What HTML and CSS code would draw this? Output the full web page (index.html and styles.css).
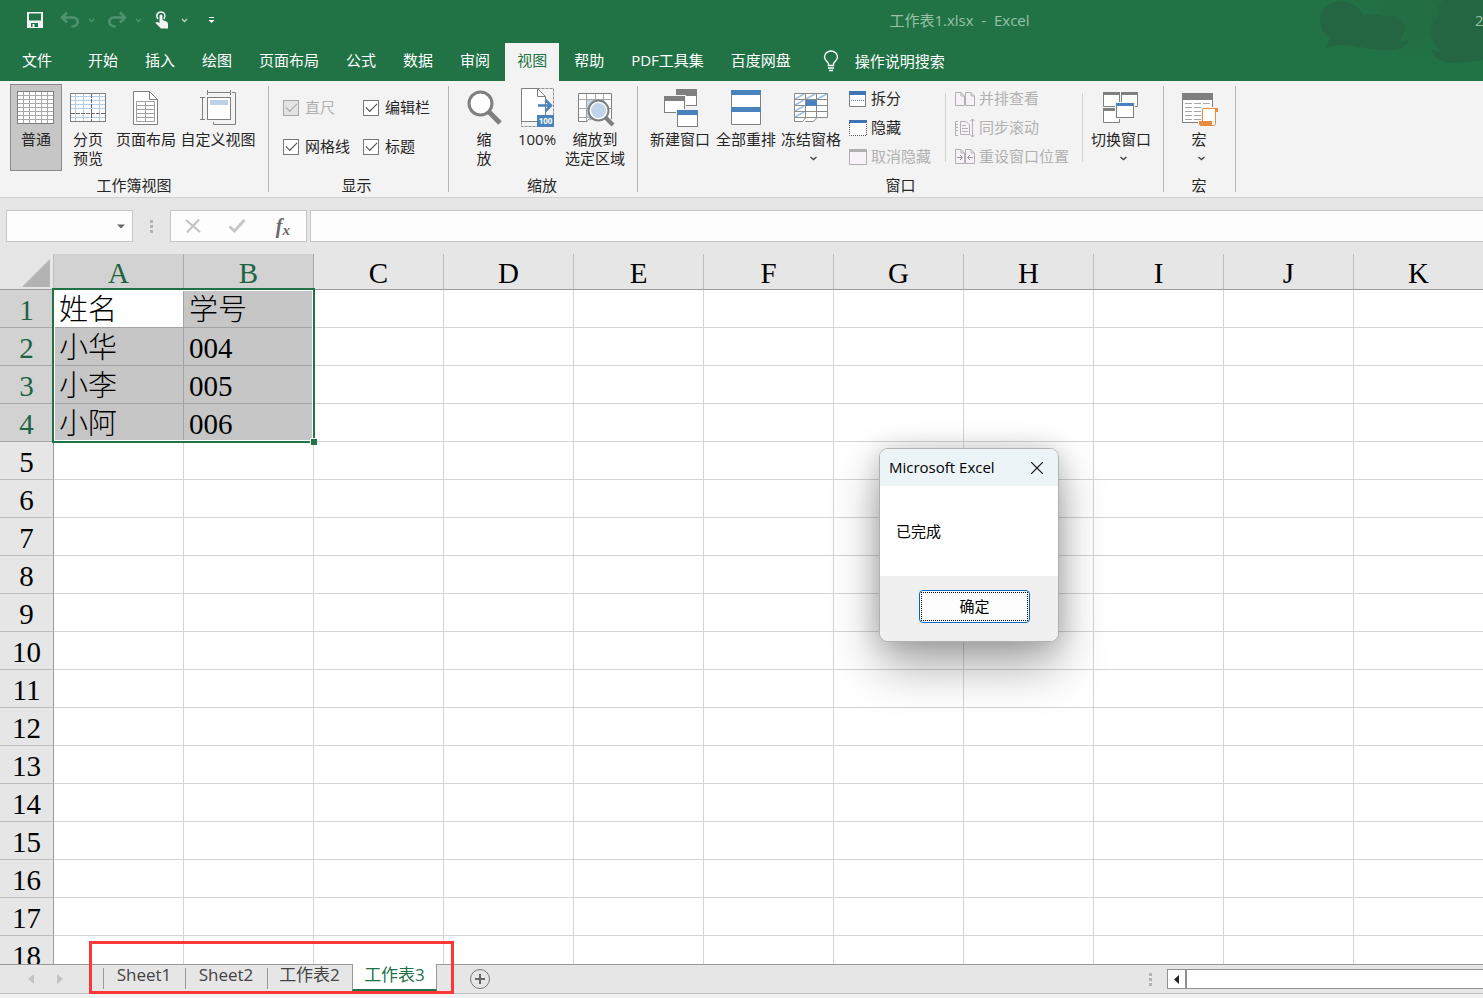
FILE: index.html
```html
<!DOCTYPE html>
<html lang="zh-CN">
<head>
<meta charset="utf-8">
<title>工作表1.xlsx - Excel</title>
<link rel="stylesheet" href="styles.css">
</head>
<body>
<div class="app">
  <header class="header">
    <svg class="clouds" width="183" height="81" viewBox="0 0 183 81" aria-hidden="true">
      <defs><radialGradient id="haze"><stop offset="0" stop-color="#246b42"/><stop offset="1" stop-color="#217346"/></radialGradient></defs>
      <ellipse cx="143" cy="6" rx="110" ry="64" fill="url(#haze)"/>
      <path fill="#246641" d="M25 49L30 38C18 31 16 12 28 5C42-3 60 4 63 16C72 12 82 16 86 17C98 12 108 22 104 33C102 39 99 42 95 43L109 40C108 48 94 51 80 50C62 49 44 40 25 49Z"/>
      <path fill="#246641" d="M131 49L143 52C128 44 128 22 140 15C136 8 140 2 146-2H183V60C168 62 154 64 146 62C136 60 132 55 131 49Z"/>
    </svg>
    <div class="titlebar">
      <div class="quick">
        <button class="qbtn" aria-label="保存"><svg width="18" height="18" viewBox="0 0 18 18"><path fill="#f2f2f2" fill-rule="evenodd" d="M1 1H17V17H1ZM3 2.500V9.500H15V2.500ZM5 12V16H6.500V13H8.500V16H12V12Z"/></svg></button>
        <button class="qbtn undo" aria-label="撤消"><svg width="20" height="18" viewBox="0 0 20 18"><path d="M2 6.500H13C20 7 19 15.500 11.500 15.500M7 1.500L2 6.500L7 11.500" fill="none" stroke="#4f9270" stroke-width="2.500"/></svg></button>
        <svg class="qarrow" width="7" height="5" viewBox="0 0 7 5"><path d="M1 1L3.500 3.500L6 1" fill="none" stroke="#4f9270" stroke-width="1.400"/></svg>
        <button class="qbtn redo" aria-label="恢复"><svg width="20" height="18" viewBox="0 0 20 18"><path d="M18 6.500H7C0 7 1 15.500 8.500 15.500M13 1.500L18 6.500L13 11.500" fill="none" stroke="#4f9270" stroke-width="2.500"/></svg></button>
        <svg class="qarrow" width="7" height="5" viewBox="0 0 7 5"><path d="M1 1L3.500 3.500L6 1" fill="none" stroke="#4f9270" stroke-width="1.400"/></svg>
        <button class="qbtn touch" aria-label="触摸/鼠标模式"><svg width="16" height="18" viewBox="0 0 16 18"><path d="M4 8C1 4 4 1 7 1S12.500 4 10 8" fill="none" stroke="#f2f2f2" stroke-width="1.500"/><path fill="#f2f2f2" d="M5.500 4.500Q7 2.500 8.500 4.500V9L12.500 10.500Q14 11 14 13V17.500H7L1.500 12Q2 10 5.500 12Z"/></svg></button>
        <svg class="qarrow" width="7" height="5" viewBox="0 0 7 5"><path d="M1 1L3.500 3.500L6 1" fill="none" stroke="#b9d3c4" stroke-width="1.400"/></svg>
        <button class="qbtn more" aria-label="自定义快速访问工具栏"><svg width="7" height="8" viewBox="0 0 7 8"><path fill="#fff" d="M1 1H6V2H1ZM.500 4H6.500L3.500 7Z"/></svg></button>
      </div>
      <div class="doc">工作表1.xlsx&nbsp; -&nbsp; Excel</div>
      <div class="account">2</div>
    </div>
    <nav class="tabs">
      <a href="#" class="tab file">文件</a><a href="#" class="tab">开始</a><a href="#" class="tab">插入</a><a href="#" class="tab">绘图</a><a href="#" class="tab">页面布局</a><a href="#" class="tab">公式</a><a href="#" class="tab">数据</a><a href="#" class="tab">审阅</a><a href="#" class="tab active">视图</a><a href="#" class="tab">帮助</a><a href="#" class="tab">PDF工具集</a><a href="#" class="tab">百度网盘</a>
      <a href="#" class="tell"><svg width="16" height="22" viewBox="0 0 16 22"><path d="M5.500 15.500V13.500C4.500 11 1.500 10.500 1.500 7A6.500 6 0 0 1 14.500 7C14.500 10.500 11.500 11 10.500 13.500V15.500ZM5 18H11M6 20.500H10" fill="none" stroke="#fff" stroke-width="1.400"/></svg><span>操作说明搜索</span></a>
    </nav>
  </header>

  <section class="ribbon">
    <div class="group g-views">
      <div class="tools">
        <button class="big w52 pressed"><svg width="40" height="42" viewBox="0 0 40 42"><rect x="1.500" y="3.500" width="36" height="32" fill="#fff" stroke="#7f7f7f"/><path d="M7.500 4V35M13.500 4V35M19.500 4V35M25.500 4V35M31.500 4V35M2 7.500H37M2 11.500H37M2 15.500H37M2 19.500H37M2 23.500H37M2 27.500H37M2 31.500H37" stroke="#a8a8a8"/></svg><span>普通</span></button>
        <button class="big w52"><svg width="40" height="42" viewBox="0 0 40 42"><rect x="2.500" y="5.500" width="35" height="28" fill="#fff" stroke="#7f7f7f"/><path d="M7.500 6V33M15.500 6V33M31.500 6V33M3 8.500H37M3 12.500H37M3 16.500H37M3 20.500H37M3 29.500H37" stroke="#b5cde5"/><path d="M23.500 6V33M3 25.500H37" stroke="#6a6a6a" stroke-dasharray="4 1"/></svg><span>分页<br>预览</span></button>
        <button class="big w64"><svg width="40" height="42" viewBox="0 0 40 42"><path d="M7.500 3.500H23.500L31.500 11.500V36.500H7.500Z" fill="#fff" stroke="#7f7f7f"/><path d="M23.500 3.500V11.500H31.500" fill="none" stroke="#7f7f7f"/><path d="M10.500 13.500H28.500V33.500H10.500ZM19.500 14V33M10.500 17.500H28.500M10.500 21.500H28.500M10.500 25.500H28.500M10.500 29.500H28.500" fill="none" stroke="#a0a0a0"/></svg><span>页面布局</span></button>
        <button class="big w80"><svg width="40" height="42" viewBox="0 0 40 42"><rect x="9.500" y="9.500" width="23" height="22" fill="#fff" stroke="#7f7f7f"/><path fill="#bdd2e9" d="M12 12H30V17H12Z"/><path d="M9.500 2V7M32.500 2V7M9.500 4.500H32.500M2 9.500H7M2 31.500H7M4.500 9.500V31.500M34 4.500H37.500V36.500H15.500V34" fill="none" stroke="#7f7f7f"/></svg><span>自定义视图</span></button>
      </div>
      <div class="glabel">工作簿视图</div>
    </div>
    <div class="group g-show">
      <div class="tools checks">
        <label class="check off"><input type="checkbox" checked disabled>直尺</label>
        <label class="check"><input type="checkbox" checked>编辑栏</label>
        <label class="check"><input type="checkbox" checked>网格线</label>
        <label class="check"><input type="checkbox" checked>标题</label>
      </div>
      <div class="glabel">显示</div>
    </div>
    <div class="group g-zoom">
      <div class="tools">
        <button class="big w52"><svg width="40" height="42" viewBox="0 0 40 42"><path d="M25 24L36 35" stroke="#7f7f7f" stroke-width="5"/><circle cx="16.500" cy="15.500" r="11.500" fill="#fff" stroke="#7f7f7f" stroke-width="3"/></svg><span>缩<br>放</span></button>
        <button class="big w54"><svg width="40" height="42" viewBox="0 0 40 42"><path d="M4.500 .5H36.500V38.500H4.500Z" fill="none" stroke="#8f8f8f" stroke-dasharray="3 1"/><path d="M4.500 .5H20.500L28.500 8.500V33.500H4.500Z" fill="#fff" stroke="#7f7f7f"/><path d="M20.500 .5V8.500H28.500" fill="none" stroke="#7f7f7f"/><path d="M21 17.500H34M28.500 12L34 17.500L28.500 23" fill="none" stroke="#4a82bd" stroke-width="2.500"/><path fill="#4a82bd" d="M20 27H37V39H20Z"/><text x="28.500" y="36" class="pct">100</text></svg><span>100%</span></button>
        <button class="big w62"><svg width="40" height="42" viewBox="0 0 40 42"><path d="M3.500 5.500H36.500V30L34 33.500H21L17 30L13 33.500H3.500Z" fill="#fff"/><path fill="#c0d4ea" d="M12 12H28V29H12Z"/><path d="M11.500 6V33M20.500 6V12M28.500 6V14M4 11.500H36M4 20.500H14M4 29.500H16M30 20.500H36" stroke="#a6a6a6"/><path d="M3.500 33.500V5.500H36.500V33M3.500 33.500H12L14 31H18" fill="none" stroke="#7f7f7f"/><path d="M30 29L38 37" stroke="#f3f3f3" stroke-width="6"/><path d="M30 29L38 37" stroke="#7f7f7f" stroke-width="4"/><circle cx="23.500" cy="22.500" r="10" fill="#fff" stroke="#7f7f7f" stroke-width="2"/><circle cx="23.500" cy="22.500" r="7.500" fill="#c0d4ea"/></svg><span>缩放到<br>选定区域</span></button>
      </div>
      <div class="glabel">缩放</div>
    </div>
    <div class="group g-window">
      <div class="tools">
        <button class="big w66"><svg width="40" height="42" viewBox="0 0 40 42"><rect x="16.500" y="1.500" width="20" height="16" fill="#fff" stroke="#7f7f7f"/><path fill="#7f7f7f" d="M16 1H37V8H16Z"/><path fill="#f3f3f3" d="M3 7H26V26H3ZM16 21H39V40H16Z"/><rect x="4.500" y="8.500" width="20" height="16" fill="#fff" stroke="#7f7f7f"/><path fill="#7f7f7f" d="M4 8H25V13H4Z"/><path fill="#f3f3f3" d="M16 21H39V40H16Z"/><rect x="17.500" y="22.500" width="20" height="16" fill="#fff" stroke="#7f7f7f"/><path fill="#4a82bd" d="M17 22H38V27H17Z"/></svg><span>新建窗口</span></button>
        <button class="big w66"><svg width="40" height="42" viewBox="0 0 40 42"><path d="M5.500 2.500H34.500V36.500H5.500Z" fill="#fff" stroke="#7f7f7f"/><path fill="#4a82bd" d="M5 2H35V7H5ZM5 19H35V24H5Z"/></svg><span>全部重排</span></button>
        <button class="big w64"><svg width="40" height="42" viewBox="0 0 40 42"><path d="M3.500 5.500H36.500V29.500H25.500L22 33.500H3.500Z" fill="#fff"/><path d="M4 11L13 6M15 11L24 6M26 11L36 6M4 17L13 12M4 23L13 18M4 29L13 24" stroke="#9fc0e2" stroke-width="1.500"/><path d="M3.500 5.500H36.500V29.500H3.500ZM14.500 6V29M25.500 6V29M4 11.500H36M4 17.500H36M4 23.500H36M3.500 29.500V33.500H11.500L14.500 30M14.500 33.500H22.500L25.500 30" fill="none" stroke="#8a8a8a"/><path fill="#4a82bd" d="M15 12H26V18H15Z"/></svg><span>冻结窗格</span><svg class="drop" width="9" height="5" viewBox="0 0 9 5"><path d="M1.500 1L4.500 3.500L7.500 1" fill="none" stroke="#444" stroke-width="1.400"/></svg></button>
        <div class="stack">
          <button class="small"><svg width="18" height="18" viewBox="0 0 18 18"><path d="M.5 1.500H16.500V16.500H.5Z" fill="#fff" stroke="#7f7f7f"/><path fill="#3f74b5" d="M0 1H17V5H0Z"/><path d="M2 10.500H15" stroke="#4a82bd" stroke-dasharray="1 1"/></svg>拆分</button>
          <button class="small"><svg width="18" height="18" viewBox="0 0 18 18"><path fill="#fff" d="M0 1H18V17H0Z"/><path d="M.5 4V16.500H17.500V4" fill="none" stroke="#555" stroke-dasharray="1 1"/><path fill="#3f74b5" d="M0 1H18V4H0Z"/></svg>隐藏</button>
          <button class="small" disabled><svg width="18" height="18" viewBox="0 0 18 18"><path d="M.5 1.500H17.500V16.500H.5Z" fill="#f6f2f8" stroke="#b0b0b0"/><path fill="#b0b0b0" d="M0 1H18V4H0Z"/></svg>取消隐藏</button>
        </div>
        <div class="stack ruled">
          <button class="small" disabled><svg width="20" height="18" viewBox="0 0 20 18"><path d="M.5 2.500H6L9.500 6V15.500H.5ZM10.500 2.500H16L19.500 6V15.500H10.500ZM6 2.500V6H9.500M16 2.500V6H19.500" fill="#f6f2f8" stroke="#b0b0b0"/></svg>并排查看</button>
          <button class="small" disabled><svg width="20" height="20" viewBox="0 0 20 20"><path d="M3 3.500H.5V17.500H3M5.500 3.500H11L14.500 7V16.500H5.500Z" fill="#f6f2f8" stroke="#b0b0b0"/><path d="M1 6.500H3M1 9.500H3M1 12.500H3M7 7.500H11M7 10.500H13M7 13.500H13M17.500 1V19M15 3.500L17.500 1L20 3.500M15 16.500L17.500 19L20 16.500" fill="none" stroke="#b0b0b0"/></svg>同步滚动</button>
          <button class="small" disabled><svg width="20" height="18" viewBox="0 0 20 18"><path d="M.5 1.500H6L9.500 5V15.500H.5ZM10.500 1.500H16L19.500 5V15.500H10.500ZM6 1.500V5H9.500M16 1.500V5H19.500" fill="#f6f2f8" stroke="#b0b0b0"/><path d="M2 9.500H7M5 7L7.500 9.500L5 12M18 9.500H13M15 7L12.500 9.500L15 12" fill="none" stroke="#999"/></svg>重设窗口位置</button>
        </div>
        <button class="big w66"><svg width="40" height="42" viewBox="0 0 40 42"><path d="M2.500 4.500H18.500V18.500H2.500ZM20.500 4.500H36.500V18.500H20.500ZM2.500 20.500H18.500V34.500H2.500Z" fill="#fff" stroke="#7f7f7f"/><path fill="#7f7f7f" d="M2 4H19V7H2ZM20 4H37V7H20ZM2 20H19V23H2Z"/><path fill="#f3f3f3" d="M14 14H34V31H14Z"/><rect x="15.500" y="15.500" width="17" height="14" fill="#fff" stroke="#7f7f7f"/><path fill="#4a82bd" d="M15 15H33V18H15Z"/></svg><span>切换窗口</span><svg class="drop" width="9" height="5" viewBox="0 0 9 5"><path d="M1.500 1L4.500 3.500L7.500 1" fill="none" stroke="#444" stroke-width="1.400"/></svg></button>
      </div>
      <div class="glabel">窗口</div>
    </div>
    <div class="group g-macro">
      <div class="tools">
        <button class="big w52"><svg width="40" height="42" viewBox="0 0 40 42"><rect x="3.500" y="5.500" width="30" height="29" fill="#fff" stroke="#7f7f7f"/><path fill="#7f7f7f" d="M3 5H34V12H3Z"/><path d="M6 15.500H31M6 19.500H31M6 23.500H31M6 27.500H31M6 31.500H31" stroke="#a6a6a6" stroke-dasharray="7 2"/><path fill="#f3f3f3" d="M22 19H40V39H19V32H22Z"/><path d="M23.500 34V22Q23.500 20.500 25 20.500H37Q38.500 20.500 38.500 23.500H36.500V35Q36.500 37.500 34 37.500H23.500Z" fill="#fff" stroke="#e78c41"/><path fill="#e78c41" d="M20 33H33V37L34.500 38H22Q20 38 20 35ZM36 20H39V24H36Z"/></svg><span>宏</span><svg class="drop" width="9" height="5" viewBox="0 0 9 5"><path d="M1.500 1L4.500 3.500L7.500 1" fill="none" stroke="#444" stroke-width="1.400"/></svg></button>
      </div>
      <div class="glabel">宏</div>
    </div>
  </section>

  <section class="formula">
    <div class="namebox"><input type="text" aria-label="名称框"><button aria-label="名称列表"><svg width="8" height="5" viewBox="0 0 8 5"><path fill="#666" d="M0 .5H8L4 4.500Z"/></svg></button></div>
    <div class="dots"><i></i><i></i><i></i></div>
    <div class="fbuttons">
      <button aria-label="取消"><svg width="18" height="16" viewBox="0 0 18 16"><path d="M2 2L16 14M15 1.500L3 14.500" stroke="#c2c2c2" stroke-width="2"/></svg></button>
      <button aria-label="输入"><svg width="18" height="16" viewBox="0 0 18 16"><path d="M1.500 8.500L6.500 13L16.500 2" fill="none" stroke="#c6c6c6" stroke-width="3"/></svg></button>
      <button class="fx" aria-label="插入函数">f<sub>x</sub></button>
    </div>
    <input class="finput" type="text" aria-label="编辑栏">
  </section>

  <main class="sheet">
    <table class="grid">
      <thead>
        <tr><th class="corner" aria-label="全选"><svg width="28" height="28" viewBox="0 0 28 28"><path fill="#b3b3b3" d="M28 0V28H0Z"/></svg></th><th class="sel">A</th><th class="sel">B</th><th>C</th><th>D</th><th>E</th><th>F</th><th>G</th><th>H</th><th>I</th><th>J</th><th>K</th></tr>
      </thead>
      <tbody id="rows">
        <tr><th class="sel">1</th><td class="cur">姓名</td><td class="sel">学号</td><td><td><td><td><td><td><td><td><td></tr>
        <tr><th class="sel">2</th><td class="sel">小华</td><td class="sel">004</td><td><td><td><td><td><td><td><td><td></tr>
        <tr><th class="sel">3</th><td class="sel">小李</td><td class="sel">005</td><td><td><td><td><td><td><td><td><td></tr>
        <tr><th class="sel">4</th><td class="sel">小阿</td><td class="sel">006</td><td><td><td><td><td><td><td><td><td></tr>
      </tbody>
    </table>
    <div class="selection"></div>
  </main>

  <footer class="bottom">
    <div class="bar">
      <div class="nav">
        <button aria-label="上一个工作表"><svg width="6" height="10" viewBox="0 0 6 10"><path fill="#c3c3c3" d="M6 0V10L0 5Z"/></svg></button>
        <button aria-label="下一个工作表"><svg width="6" height="10" viewBox="0 0 6 10"><path fill="#c3c3c3" d="M0 0V10L6 5Z"/></svg></button>
      </div>
      <div class="sheets"><a href="#" class="stab">Sheet1</a><a href="#" class="stab">Sheet2</a><a href="#" class="stab">工作表2</a><a href="#" class="stab on">工作表3</a></div>
      <button class="add" aria-label="新工作表"><svg width="22" height="22" viewBox="0 0 22 22"><circle cx="11" cy="11" r="9.500" fill="none" stroke="#777"/><path d="M11 6V16M6 11H16" stroke="#666" stroke-width="2"/></svg></button>
      <div class="dots tail"><i></i><i></i><i></i></div>
      <div class="scroll"><button aria-label="向左滚动"><svg width="5" height="9" viewBox="0 0 5 9"><path fill="#222" d="M5 0V9L0 4.500Z"/></svg></button></div>
    </div>
    <div class="mark"></div>
  </footer>

  <div class="dialog" role="dialog" aria-labelledby="dlg">
    <div class="dhead"><span id="dlg">Microsoft Excel</span><button class="close" aria-label="关闭"><svg width="12" height="12" viewBox="0 0 12 12"><path d="M0 0L12 12M12 0L0 12" stroke="#111" stroke-width="1.200"/></svg></button></div>
    <div class="dbody">已完成</div>
    <div class="dfoot"><button class="ok"><span>确定</span></button></div>
  </div>
</div>
<script src="sheet.js"></script>
</body>
</html>
```

FILE: styles.css
```css
* { box-sizing: border-box; }
body {
  margin: 0;
  font: 15px/19px "Open Sans", "Noto Sans CJK SC", sans-serif;
  color: #262626;
  overflow: hidden;
}
button, input { font: inherit; color: inherit; margin: 0; padding: 0; border: 0; background: none; }
a { color: inherit; text-decoration: none; }
svg { display: block; flex: none; }
.app { position: relative; display: flex; flex-direction: column; height: 100vh; background: #e6e6e6; }

/* Title bar and ribbon tabs */
.header { position: relative; background: #217346; color: #fff; }
.clouds { position: absolute; right: 0; top: 0; }
.titlebar { position: relative; display: flex; align-items: center; height: 43px; color: #98c1a8; }
.quick { display: flex; align-items: center; align-self: flex-start; width: 220px; padding-left: 26px; height: 40px; }
.qarrow { margin-left: 8px; }
.undo { margin-left: 16px; }
.redo { margin-left: 12px; }
.touch { margin-left: 12px; }
.quick .touch + .qarrow { margin-left: 11px; }
.more { margin-left: 20px; }
.doc { flex: 1; padding-left: 224px; text-align: center; height: 22px; }
.account { width: 8px; height: 22px; white-space: nowrap; }
.tabs { position: relative; display: flex; gap: 3px; height: 38px; padding-left: 10px; }
.tab { padding: 8px 12px; white-space: nowrap; }
.tab.file { margin-right: 9px; }
.tab.active { background: #f3f3f3; color: #217346; }
.tell { display: flex; align-items: center; gap: 16px; padding: 0 0 2px 17px; white-space: nowrap; }

/* Ribbon */
.ribbon { display: flex; background: #f3f3f3; border-bottom: 1px solid #d0d0d0; height: 117px; white-space: nowrap; }
.group { display: flex; flex-direction: column; position: relative; padding: 3px 9px 0; }
.group::after { content: ""; position: absolute; right: 0; top: 5px; bottom: 5px; width: 1px; background: #b5b5b5; }
.g-views { padding: 3px 11px 0 10px; }
.g-show { padding: 3px 19px 0 14px; }
.g-zoom { padding-right: 12px; }
.g-window { padding: 3px 10px 0 9px; }
.g-macro { padding-right: 11px; }
.tools { display: flex; flex: none; height: 87px; }
.glabel { flex: none; text-align: center; line-height: 29px; height: 26px; }
.big { display: flex; flex-direction: column; align-items: center; padding-top: 3px; border: 1px solid transparent; text-align: center; }
.pressed { background: #c6c6c6; border-color: #8a8a8a; }
.big.w52 { width: 52px; }
.big.w54 { width: 54px; }
.big.w62 { width: 62px; }
.big.w64 { width: 64px; }
.big.w66 { width: 66px; }
.big.w80 { width: 80px; }
.drop { margin-top: 7px; margin-left: 4px; }
.pct { font: 700 8px "Open Sans", sans-serif; fill: #fff; text-anchor: middle; }
.checks { display: grid; grid-template-columns: 80px auto; grid-auto-rows: 39px; padding-top: 4px; }
.check { display: flex; align-items: center; gap: 6px; }
.check input { appearance: none; width: 16px; height: 16px; border: 1px solid #777; background: #fff; display: grid; place-items: center; }
.check input::before { content: ""; width: 10px; height: 5px; border: solid #444; border-width: 0 0 1px 1px; transform: translateY(-2px) rotate(-45deg); }
.check.off { color: #b1b1b1; }
.check.off input { background: #e3e3e3; border-color: #a6a6a6; }
.check.off input::before { border-color: #a6a6a6; }
.stack { display: flex; flex-direction: column; padding: 0 14px 0 6px; }
.stack.ruled { position: relative; padding: 0 14px 0 10px; margin-right: 5px; }
.stack.ruled::before, .stack.ruled::after { content: ""; position: absolute; top: 9px; height: 69px; width: 1px; background: #d2d2d2; }
.stack.ruled::before { left: 0; }
.stack.ruled::after { right: 0; }
.small { display: flex; align-items: center; gap: 4px; height: 29px; }
.small:disabled { color: #b1b1b1; }

/* Formula bar */
.formula { display: flex; height: 56px; padding: 12px 0 12px 6px; }
.formula > div, .finput { height: 32px; }
.namebox, .fbuttons, .finput { background: #fdfdfd; border: 1px solid #c6c6c6; }
.namebox { display: flex; width: 127px; }
.namebox input { flex: 1; min-width: 0; padding-left: 6px; }
.namebox button { width: 22px; display: grid; place-items: center; }
.dots { display: flex; flex-direction: column; justify-content: center; align-items: center; gap: 2px; width: 37px; }
.dots i { width: 3px; height: 3px; background: #b3b3b3; }
.fbuttons { display: flex; align-items: center; justify-content: space-around; width: 137px; margin-right: 3px; }
.fbuttons .fx { width: 20px; font: italic 700 20px/22px "Liberation Serif", serif; color: #6a6a6a; }
.fx sub { font-size: 15px; line-height: 1px; vertical-align: -2px; }
.finput { flex: 1; border-right: 0; padding: 0 6px; }

/* Worksheet */
.sheet { position: relative; flex: 1; min-height: 0; overflow: hidden; background: #fff; }
.grid { table-layout: fixed; width: 1484px; border-spacing: 0; font: 300 29px/33px "Liberation Serif", "Noto Sans CJK SC", serif; color: #000; }
.grid th, .grid td { height: 38px; padding: 4px 0 0 5px; border: solid #d4d4d4; border-width: 0 1px 1px 0; text-align: left; white-space: nowrap; }
.grid th { padding: 4px 0 0; background: #e6e6e6; text-align: center; font-weight: 400; border-color: #bdbdbd; }
.grid thead th { width: 130px; height: 36px; line-height: 31px; border-bottom-color: #9b9b9b; }
.grid thead th.corner { width: 54px; padding: 0; }
.corner svg { margin: 3px 0 0 22px; }
.grid tbody th { border-right-color: #9b9b9b; }
.grid th.sel { background: #d2d2d2; color: #1e6443; border-color: #a9a9a9; }
.grid td.sel { background: #c6c6c6; border-color: #a3a3a3; }
.grid td.cur { border-color: #a3a3a3; }
.selection { position: absolute; left: 52px; top: 34px; width: 263px; height: 155px; border: 2px solid #217346; box-shadow: inset 0 0 0 1px #fff; }
.selection::after { content: ""; position: absolute; right: -4px; bottom: -4px; width: 6px; height: 6px; background: #217346; border: solid #fff; border-width: 1px 0 0 1px; }

/* Sheet tabs */
.bottom { position: relative; height: 34px; background: #f3f3f3; }
.bar { display: flex; height: 30px; background: #e6e6e6; border-top: 1px solid #999; border-bottom: 1px solid #c3c3c3; }
.nav { display: flex; align-items: center; gap: 23px; width: 103px; padding-left: 28px; }
.sheets { display: flex; font-size: 17px; color: #444; }
.stab { position: relative; width: 82px; text-align: center; line-height: 20px; height: 26px; }
.stab:not(.on)::before { content: ""; position: absolute; left: 0; top: 3px; height: 21px; width: 1px; background: #999; }
.stab:nth-child(3) { width: 85px; }
.stab.on { width: 85px; margin-top: -1px; height: 27px; padding-top: 1px; background: #fff; border: solid #999; border-width: 0 1px 2px; border-bottom-color: #217346; color: #217346; }
.add { margin-left: 32px; align-self: center; }
.dots.tail { width: 33px; margin-left: auto; }
.scroll { width: 316px; height: 20px; margin-top: 4px; background: #fff; border: solid #8f8f8f; border-width: 1px 0 1px 1px; }
.scroll button { display: grid; place-items: center; width: 19px; height: 18px; border-right: 2px solid #8f8f8f; }
.mark { position: absolute; left: 89px; top: -23px; width: 365px; height: 53px; border: 3px solid #fb3737; }

/* Message box */
.dialog { position: absolute; left: 879px; top: 448px; width: 180px; border: 1px solid #b0b0b0; border-radius: 9px; background: #fff; color: #000; overflow: hidden; box-shadow: 0 24px 48px rgba(0, 0, 0, .34), 0 0 24px rgba(0, 0, 0, .16); }
.dhead { display: flex; align-items: center; justify-content: space-between; height: 37px; padding: 0 15px 0 9px; background: #ecf4f8; }
.dhead span { white-space: nowrap; }
.dbody { height: 90px; padding: 36px 16px; }
.dfoot { display: flex; justify-content: flex-end; height: 65px; padding: 14px 28px; background: #f0f0f0; }
.ok { width: 111px; height: 33px; padding: 1px; border: 1px solid #0067c0; border-radius: 4px; background: #fdfdfd; }
.ok span { display: grid; place-items: center; height: 29px; border: 1px dotted #000; }
```

FILE: sheet.js
```
const rows = document.getElementById('rows');
for (let n = 5; n <= 18; n++) {
  const tr = rows.insertRow();
  const th = document.createElement('th');
  th.textContent = n;
  tr.append(th);
  for (let c = 0; c < 11; c++) tr.insertCell();
}
```
